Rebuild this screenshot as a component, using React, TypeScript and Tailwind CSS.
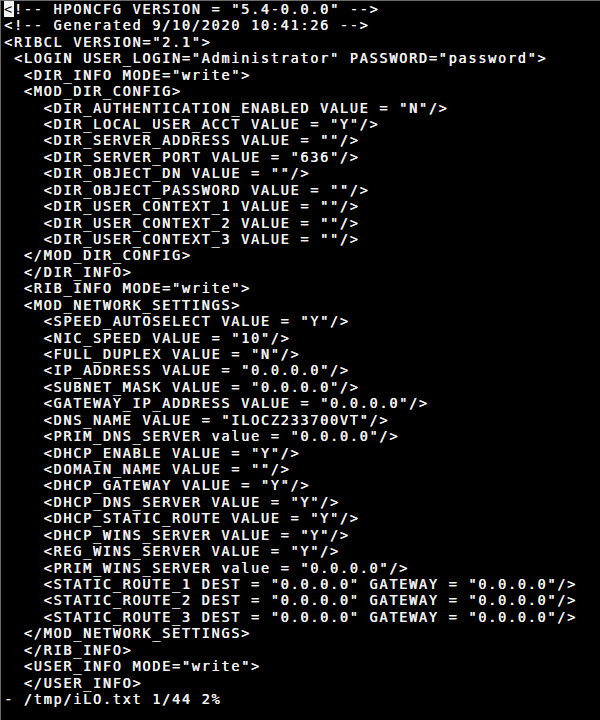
import React from "react";

const lines: string[] = [
  `!-- HPONCFG VERSION = "5.4-0.0.0" -->`,
  `<!-- Generated 9/10/2020 10:41:26 -->`,
  `<RIBCL VERSION="2.1">`,
  ` <LOGIN USER_LOGIN="Administrator" PASSWORD="password">`,
  `  <DIR_INFO MODE="write">`,
  `  <MOD_DIR_CONFIG>`,
  `    <DIR_AUTHENTICATION_ENABLED VALUE = "N"/>`,
  `    <DIR_LOCAL_USER_ACCT VALUE = "Y"/>`,
  `    <DIR_SERVER_ADDRESS VALUE = ""/>`,
  `    <DIR_SERVER_PORT VALUE = "636"/>`,
  `    <DIR_OBJECT_DN VALUE = ""/>`,
  `    <DIR_OBJECT_PASSWORD VALUE = ""/>`,
  `    <DIR_USER_CONTEXT_1 VALUE = ""/>`,
  `    <DIR_USER_CONTEXT_2 VALUE = ""/>`,
  `    <DIR_USER_CONTEXT_3 VALUE = ""/>`,
  `  </MOD_DIR_CONFIG>`,
  `  </DIR_INFO>`,
  `  <RIB_INFO MODE="write">`,
  `  <MOD_NETWORK_SETTINGS>`,
  `    <SPEED_AUTOSELECT VALUE = "Y"/>`,
  `    <NIC_SPEED VALUE = "10"/>`,
  `    <FULL_DUPLEX VALUE = "N"/>`,
  `    <IP_ADDRESS VALUE = "0.0.0.0"/>`,
  `    <SUBNET_MASK VALUE = "0.0.0.0"/>`,
  `    <GATEWAY_IP_ADDRESS VALUE = "0.0.0.0"/>`,
  `    <DNS_NAME VALUE = "ILOCZ233700VT"/>`,
  `    <PRIM_DNS_SERVER value = "0.0.0.0"/>`,
  `    <DHCP_ENABLE VALUE = "Y"/>`,
  `    <DOMAIN_NAME VALUE = ""/>`,
  `    <DHCP_GATEWAY VALUE = "Y"/>`,
  `    <DHCP_DNS_SERVER VALUE = "Y"/>`,
  `    <DHCP_STATIC_ROUTE VALUE = "Y"/>`,
  `    <DHCP_WINS_SERVER VALUE = "Y"/>`,
  `    <REG_WINS_SERVER VALUE = "Y"/>`,
  `    <PRIM_WINS_SERVER value = "0.0.0.0"/>`,
  `    <STATIC_ROUTE_1 DEST = "0.0.0.0" GATEWAY = "0.0.0.0"/>`,
  `    <STATIC_ROUTE_2 DEST = "0.0.0.0" GATEWAY = "0.0.0.0"/>`,
  `    <STATIC_ROUTE_3 DEST = "0.0.0.0" GATEWAY = "0.0.0.0"/>`,
  `  </MOD_NETWORK_SETTINGS>`,
  `  </RIB_INFO>`,
  `  <USER_INFO MODE="write">`,
  `  </USER_INFO>`,
  `- /tmp/iLO.txt 1/44 2%`,
];

// rows are ~16.43px apart; snap each to whole pixels so thin strokes stay crisp
const rowH = (i: number) => Math.round((i + 1) * 16.43) - Math.round(i * 16.43);

const App = () => {
  return (
    <div className="w-[600px] h-[720px] bg-black border-t border-l border-[#6b6b6b] pl-[3px] overflow-hidden">
      <pre
        className="text-[#f4f4f4] text-[13.5px] tracking-[1.75px] m-0 [text-shadow:0.4px_0_0_#f4f4f4]"
        style={{ fontFamily: '"DejaVu Sans Mono", "Liberation Mono", monospace' }}
      >
        {lines.map((line, i) => (
          <div
            key={i}
            className={
              rowH(i) === 17
                ? "h-[17px] leading-[17px] whitespace-pre"
                : "h-[16px] leading-[16px] whitespace-pre"
            }
          >
            {i === 0 && (
              <span className="bg-[#f4f4f4] text-black [text-shadow:none]">{"<"}</span>
            )}
            {line}
          </div>
        ))}
      </pre>
    </div>
  );
};

export default App;
